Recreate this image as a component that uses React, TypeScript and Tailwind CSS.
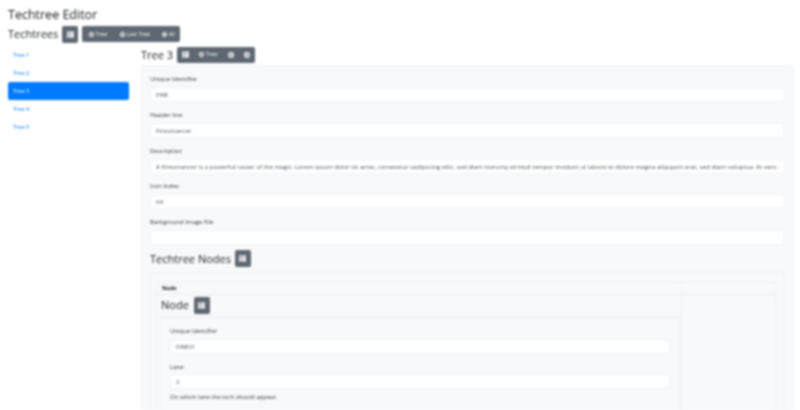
import { FaArrowCircleLeft, FaArrowCircleRight, FaPlusCircle, FaThList, FaTimesCircle } from "react-icons/fa";

const FONT = "font-['Open_Sans','Liberation_Sans',sans-serif]";

function IconBtn({ className = "" }: { className?: string }) {
  return (
    <button className={`flex h-[17px] w-[16px] shrink-0 items-center justify-center rounded-[2px] bg-[#5f6872] text-white ${className}`}>
      <FaThList size={7} />
    </button>
  );
}

function Field({ label, value, help, labelGap = "mb-[3px]", gap = "mb-[7.8px]" }: { label: string; value: string; help?: string; labelGap?: string; gap?: string }) {
  return (
    <div className={gap}>
      <label className={`block h-[10px] text-[6px] leading-[10px] text-[#2c3136] ${labelGap}`}>{label}</label>
      <input
        readOnly
        value={value}
        className="block h-[15px] w-full rounded-[2px] border border-[#f1f2f4] bg-white px-[5px] text-[6.18px] text-[#495057] outline-none"
      />
      {help && <p className="mt-[3px] h-[10px] text-[6px] leading-[10px] text-[#2c3136]">{help}</p>}
    </div>
  );
}

function ToolItem({ icon, text, className = "" }: { icon: React.ReactNode; text?: string; className?: string }) {
  return (
    <span className={`flex h-full items-center justify-center gap-[2px] ${className}`}>
      {icon}
      {text}
    </span>
  );
}

const trees = ["Tree 1", "Tree 2", "Tree 3", "Tree 4", "Tree 5"];

export default function App() {
  return (
    <div className={`h-[410px] w-[800px] overflow-hidden bg-white pl-2 pr-[6px] pt-[6px] text-[#16191c] blur-[0.85px] ${FONT}`}>
      <h1 className="h-[17px] text-[12.5px] leading-[17px]">Techtree Editor</h1>
      <div className="mt-[2px] flex h-[18px] items-center">
        <h2 className="text-[11px] leading-[18px]">Techtrees</h2>
        <IconBtn className="ml-[4px]" />
        <div className="ml-[4px] flex h-[16px] w-[98px] items-center rounded-[2px] bg-[#5f6872] text-[5.5px] text-white">
          <ToolItem icon={<FaPlusCircle size={5} />} text="Tree" className="w-[31px]" />
          <ToolItem icon={<FaPlusCircle size={5} />} text="Last Tree" className="w-[43px]" />
          <ToolItem icon={<FaTimesCircle size={5} />} text="All" className="w-[24px]" />
        </div>
      </div>

      <div className="mt-[1px] flex">
        <ul className="mt-[2px] w-[121px] shrink-0">
          {trees.map((t) => (
            <li
              key={t}
              className={`h-[18px] rounded-[2px] px-[5px] text-[5.6px] leading-[18px] ${t === "Tree 3" ? "bg-[#007bff] text-white" : "text-[#007bff]"}`}
            >
              {t}
            </li>
          ))}
        </ul>

        <div className="ml-[12px] min-w-0 flex-1">
          <div className="flex h-[21px] items-center">
            <h3 className="text-[11px] leading-[18px]">Tree 3</h3>
            <div className="ml-[4px] flex h-[16px] w-[78px] items-center rounded-[2px] bg-[#5f6872] text-[5.5px] text-white">
              <ToolItem icon={<FaThList size={7} />} className="w-[16px]" />
              <ToolItem icon={<FaPlusCircle size={5} />} text="Tree" className="w-[30px]" />
              <ToolItem icon={<FaArrowCircleLeft size={6} />} className="w-[16px]" />
              <ToolItem icon={<FaArrowCircleRight size={6} />} className="w-[16px]" />
            </div>
          </div>

          <div className="h-[400px] rounded-[2px] border border-[#f3f4f6] bg-[#f8f9fa] px-[8px] pt-[8px]">
            <Field label="Unique Identifier" value="FIRE" />
            <Field label="Header line" value="Firesmancer" />
            <Field label="Description" value="A Firesmancer is a powerful caster of the magic. Lorem ipsum dolor sit amet, consetetur sadipscing elitr, sed diam nonumy eirmod tempor invidunt ut labore et dolore magna aliquyam erat, sed diam voluptua. At vero eos et accusam" />
            <Field label="Icon Index" value="64" />
            <Field label="Background Image File" value="" />

            <div className="-mt-[3px] flex h-[18px] items-center">
              <h3 className="text-[11px] leading-[18px]">Techtree Nodes</h3>
              <IconBtn className="ml-[4px]" />
            </div>

            <div className="mt-[4px] rounded-[2px] border border-[#f1f2f4] pb-[8px] pl-[5px] pr-[8px] pt-[9px]">
              <div className="flex h-[13px] border border-[#f1f2f4] border-b-[#eceef0]">
                <div className="w-[525px] border-r border-[#f1f2f4] pl-[5px] text-[5.5px] font-bold leading-[11px]">Node</div>
                <div className="flex-1" />
              </div>
              <div className="flex border-x border-[#f1f2f4]">
                <div className="w-[525px] border-r border-[#f1f2f4]">
                  <div className="flex h-[22px] items-center border-b border-[#f1f2f4] pl-[4px]">
                    <h4 className="text-[11px] leading-[18px]">Node</h4>
                    <IconBtn className="ml-[5px]" />
                  </div>
                  <div className="ml-[3px] mr-[1px] h-[100px] border border-[#f1f2f4] pl-[9px] pr-[9px] pt-[8px]">
                    <Field label="Unique Identifier" value="FIRE01" gap="mb-[8px]" />
                    <Field label="Lane" value="2" help="On which lane the tech should appear." labelGap="mb-[2px]" />
                  </div>
                </div>
                <div className="flex-1" />
              </div>
            </div>
          </div>
        </div>
      </div>
    </div>
  );
}
